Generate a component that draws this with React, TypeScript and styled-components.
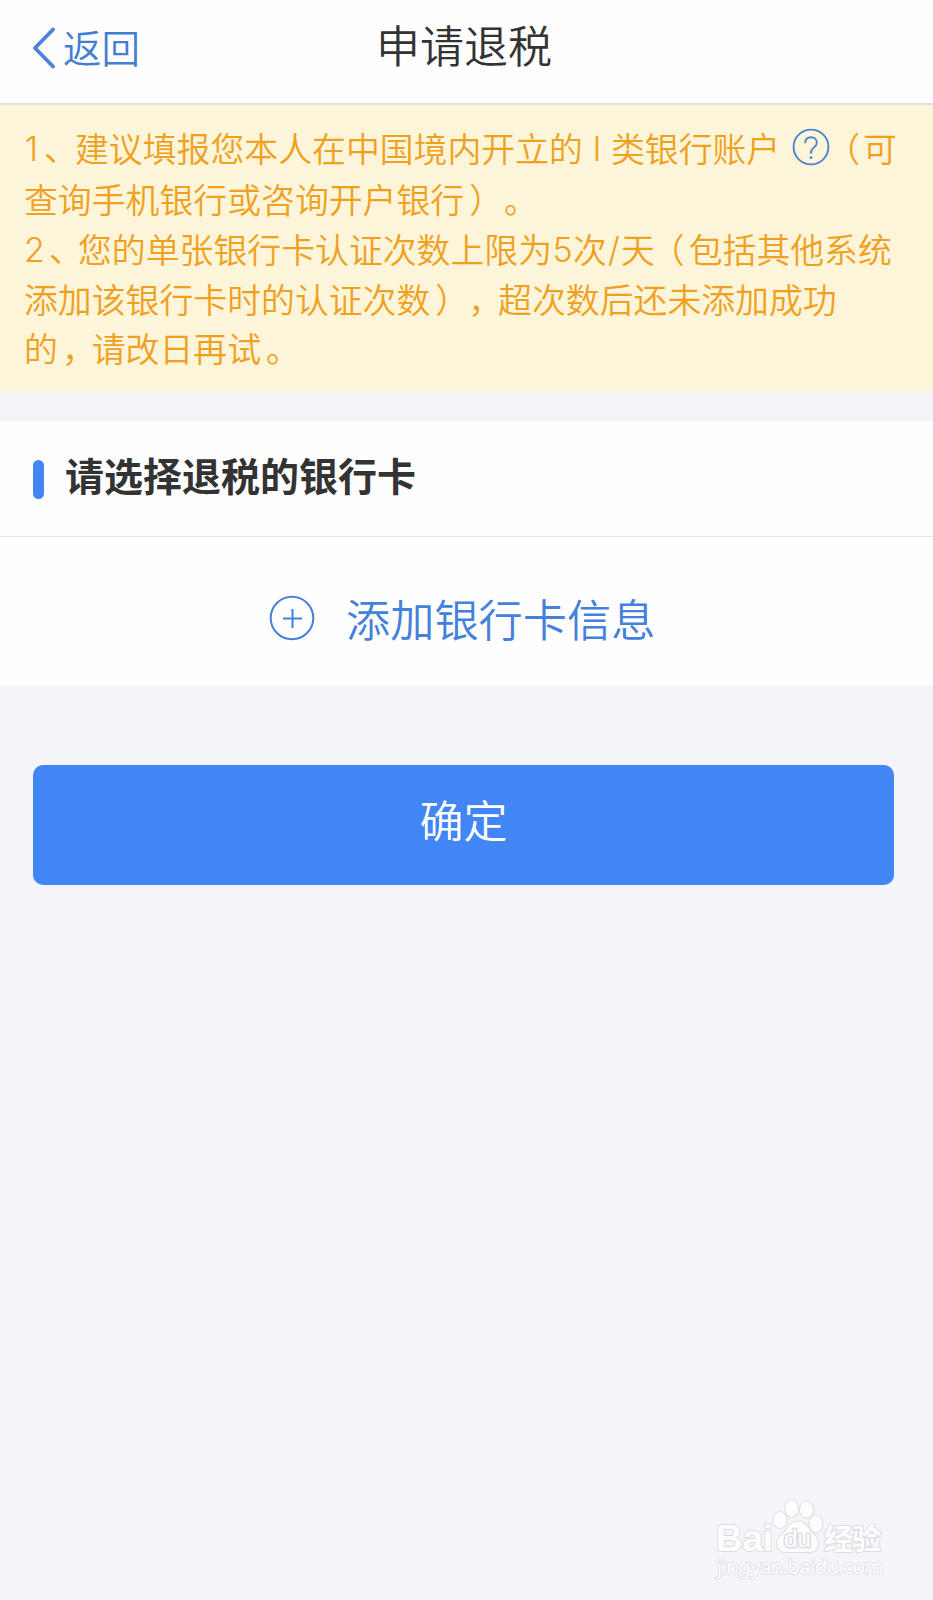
import React from "react";
import styled, { createGlobalStyle } from "styled-components";

const GlobalStyle = createGlobalStyle`
  * { box-sizing: border-box; }
  body { margin: 0; background: #f3f5f9; }
`;

const Page = styled.div`
  position: relative;
  min-height: 1600px;
  background: #f3f5f9;
  font-family: "Noto Sans CJK SC", sans-serif;
  text-spacing-trim: space-all;
  overflow: hidden;
`;

const Header = styled.header`
  display: grid;
  grid-template-columns: 200px 1fr 200px;
  height: 105px;
  padding-bottom: 8px;
  background: #fefefe;
  border-bottom: 2px solid #e0e0e2;
`;

const BackButton = styled.button`
  display: flex;
  align-items: center;
  gap: 8px;
  padding: 0 0 0 32px;
  border: 0;
  background: none;
  font: 350 38.5px/56px "Noto Sans CJK SC", sans-serif;
  color: #427fd3;
`;

const BackLabel = styled.span`
  padding-bottom: 4px;
`;

const Title = styled.h1`
  margin: 0;
  padding-right: 5px;
  font-size: 44px;
  font-weight: 350;
  line-height: 89px;
  text-align: center;
  color: #333;
`;

const Notice = styled.section`
  height: 287px;
  padding: 16px 0 0 24px;
  background: #fdf5d9;
  color: #f0a020;
`;

const NoticeLine = styled.p<{ $height?: number }>`
  display: flex;
  align-items: center;
  height: ${(p) => p.$height ?? 49.8}px;
  margin: 0;
  font-family: "Noto Sans CJK SC", sans-serif;
  font-size: 33.87px;
  font-weight: 350;
  line-height: 1;
  white-space: pre;
`;

const ListMark = styled.span<{ $width: number }>`
  display: flex;
  gap: 5px;
  width: ${(p) => p.$width}px;
`;

const Latin = styled.span<{ $width: number }>`
  flex: none;
  width: ${(p) => p.$width}px;
  padding-top: 2px;
  text-align: center;
  font-family: Inter, "Liberation Sans", sans-serif;
  font-size: 34px;
  font-weight: 300;
`;

/* Centres a full-width mark in its cell without changing its advance. */
const Punct = styled.span<{ $shift: number }>`
  flex: none;
  margin: 0 ${(p) => -p.$shift}px 0 ${(p) => p.$shift}px;
`;

const HelpIcon = styled.svg`
  width: 38px;
  height: 38px;
  margin: 0 -1px 2px 12px;
`;

const Card = styled.section`
  margin-top: 29px;
  background: #fefefe;
`;

const CardHeader = styled.div`
  display: flex;
  align-items: center;
  gap: 21px;
  height: 116px;
  padding: 0 0 0 33px;
  border-bottom: 1px solid #e4e5e8;
`;

const Accent = styled.span`
  width: 11px;
  height: 39px;
  margin-top: 1px;
  border-radius: 6px;
  background: #4285f4;
`;

const CardTitle = styled.h2`
  margin: 0 0 9px;
  font-size: 39px;
  font-weight: 700;
  line-height: 56px;
  color: #333;
`;

const AddCard = styled.button`
  display: flex;
  align-items: center;
  gap: 31px;
  width: 100%;
  height: 148px;
  padding: 14px 0 0 269px;
  border: 0;
  background: none;
  font: 350 44.2px/60px "Noto Sans CJK SC", sans-serif;
  color: #4481db;
`;

const Confirm = styled.button`
  display: block;
  width: 861px;
  height: 120px;
  margin: 80px 0 0 33px;
  padding: 0 0 13px;
  border: 0;
  border-radius: 10px;
  background: #4285f4;
  font: 350 44px/60px "Noto Sans CJK SC", sans-serif;
  color: #fff;
`;

const Watermark = styled.svg`
  position: absolute;
  left: 707px;
  top: 1492px;
  width: 190px;
  height: 96px;
`;

export default function App() {
  return (
    <Page>
      <GlobalStyle />
      <Header>
        <BackButton>
          <svg width="23" height="42" viewBox="0 0 23 42" fill="none">
            <path d="M21 2.5 3 21l18 18.5" stroke="#4a82dc" strokeWidth="3.8" strokeLinecap="round" strokeLinejoin="round" />
          </svg>
          <BackLabel>返回</BackLabel>
        </BackButton>
        <Title>申请退税</Title>
      </Header>

      <Notice>
        <NoticeLine $height={53}>
          <ListMark $width={51}>
            <Latin $width={15}>1</Latin>、
          </ListMark>
          建议填报您本人在中国境内开立的
          <Latin $width={28}>I</Latin>
          类银行账户
          <HelpIcon viewBox="0 0 38 38" fill="none" stroke="#4d83d0" strokeWidth="1.9">
            <circle cx="19" cy="19" r="17.4" />
            <path d="M13.2 15.2c0-3.6 2.3-5.9 5.8-5.9s5.8 2.2 5.8 5.4c0 4.8-5.8 4.6-5.8 9.8v1.2" />
            <circle cx="19" cy="29.6" r="1.4" fill="#4d83d0" stroke="none" />
          </HelpIcon>
          <Punct $shift={-3}>（</Punct>可
        </NoticeLine>
        <NoticeLine>
          查询手机银行或咨询开户银行<Punct $shift={5}>）</Punct><Punct $shift={6}>。</Punct>
        </NoticeLine>
        <NoticeLine>
          <ListMark $width={54}>
            <Latin $width={20}>2</Latin>、
          </ListMark>
          您的单张银行卡认证次数上限为
          <Latin $width={21}>5</Latin>
          次
          <Latin $width={14}>/</Latin>
          天<Punct $shift={-4}>（</Punct>包括其他系统
        </NoticeLine>
        <NoticeLine>
          添加该银行卡时的认证次数<Punct $shift={5}>）</Punct><Punct $shift={4}>，</Punct>超次数后还未添加成功
        </NoticeLine>
        <NoticeLine>
          的<Punct $shift={4}>，</Punct>请改日再试<Punct $shift={5}>。</Punct>
        </NoticeLine>
      </Notice>

      <Card>
        <CardHeader>
          <Accent />
          <CardTitle>请选择退税的银行卡</CardTitle>
        </CardHeader>
        <AddCard>
          <svg width="46" height="46" viewBox="0 0 46 46" fill="none" stroke="#4481db" strokeWidth="2">
            <circle cx="23" cy="23" r="21.3" />
            <path d="M14 23.5h19M23.5 14v19" />
          </svg>
          添加银行卡信息
        </AddCard>
      </Card>

      <Confirm>确定</Confirm>

      <Watermark viewBox="0 0 190 96" fill="#fdfdfe" stroke="#dcdde2" strokeWidth="2" paintOrder="stroke" strokeLinejoin="round">
        <text x="9" y="59" fontFamily="Liberation Sans, sans-serif" fontSize="37" fontWeight="700" textLength="57" lengthAdjust="spacingAndGlyphs">Bai</text>
        <ellipse cx="73" cy="28" rx="6.5" ry="8" />
        <ellipse cx="84.5" cy="16.5" rx="6.5" ry="8.5" />
        <ellipse cx="99.5" cy="17.5" rx="6.5" ry="8.5" />
        <ellipse cx="109" cy="32" rx="6.5" ry="8.5" />
        <path d="M91 29.5c7 0 9 5 13 10 4 4 7 7 7 12 0 6-4 8.5-9 8.5H79c-5 0-9-3-9-8.5 0-5 4-8 8-12 4-5 6-10 13-10Z" />
        <text x="77" y="55" fontFamily="Liberation Sans, sans-serif" fontSize="23" textLength="27" lengthAdjust="spacingAndGlyphs" strokeWidth="3">du</text>
        <text x="117" y="58" fontFamily="Noto Sans CJK SC, sans-serif" fontSize="29" fontWeight="700" textLength="57">经验</text>
        <text x="10" y="82" fontFamily="Noto Sans, sans-serif" fontSize="20" textLength="166" strokeWidth="1.5">jingyan.baidu.com</text>
      </Watermark>
    </Page>
  );
}
